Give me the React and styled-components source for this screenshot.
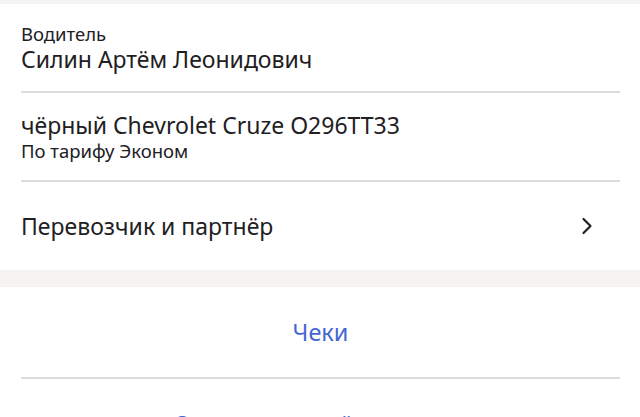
import React from "react";
import styled, { createGlobalStyle } from "styled-components";

const GlobalStyle = createGlobalStyle`
  html, body {
    margin: 0;
    padding: 0;
    background: #ffffff;
  }
  body {
    font-family: "Noto Sans", "Open Sans", sans-serif;
    color: #21201f;
    -webkit-font-smoothing: antialiased;
  }
`;

const Page = styled.div`
  width: 640px;
  height: 417px;
  overflow: hidden;
  background: #f5f4f2;
  padding-top: 4px;
  box-sizing: border-box;
`;

const Card = styled.section`
  background: #ffffff;
  display: flex;
  flex-direction: column;
  margin-bottom: ${(p) => p.$gap || 0}px;
`;

const Row = styled.div`
  height: ${(p) => p.$h}px;
  padding: 0 20px 0 21px;
  display: flex;
  align-items: center;
  justify-content: ${(p) => (p.$center ? "center" : "space-between")};
  box-sizing: border-box;
`;

const Stack = styled.div`
  display: flex;
  flex-direction: column;
`;

const Caption = styled.div`
  font-size: 18.5px;
  line-height: 23px;
  color: #21201f;
`;

const Title = styled.div`
  font-size: 23px;
  line-height: 28px;
  color: #21201f;
`;

const LinkText = styled.div`
  font-size: 23.5px;
  line-height: 28px;
  color: #4565d3;
`;

const Divider = styled.div`
  height: 2px;
  background: #dcdcdc;
  margin: 0 20px 0 21px;
`;

const ChevronBox = styled.span`
  display: flex;
  margin-right: 26px;
`;

const Chevron = () => (
  <ChevronBox>
    <svg width="14" height="18" viewBox="0 0 14 18" fill="none">
      <path
        d="M3.5 2 L10.5 9 L3.5 16"
        stroke="#21201f"
        strokeWidth="2.2"
        strokeLinecap="round"
        strokeLinejoin="round"
      />
    </svg>
  </ChevronBox>
);

export default function App() {
  return (
    <>
      <GlobalStyle />
      <Page>
        <Card $gap={17}>
          <Row $h={87}>
            <Stack>
              <Caption>Водитель</Caption>
              <Title>Силин Артём Леонидович</Title>
            </Stack>
          </Row>
          <Divider />
          <Row $h={87}>
            <Stack>
              <Title>чёрный Chevrolet Cruze O296TT33</Title>
              <Caption>По тарифу Эконом</Caption>
            </Stack>
          </Row>
          <Divider />
          <Row $h={88}>
            <Title>Перевозчик и партнёр</Title>
            <Chevron />
          </Row>
        </Card>
        <Card>
          <Row $h={90} $center>
            <LinkText>Чеки</LinkText>
          </Row>
          <Divider />
          <Row $h={90} $center>
            <LinkText>Отправить отчёт на почту</LinkText>
          </Row>
        </Card>
      </Page>
    </>
  );
}
